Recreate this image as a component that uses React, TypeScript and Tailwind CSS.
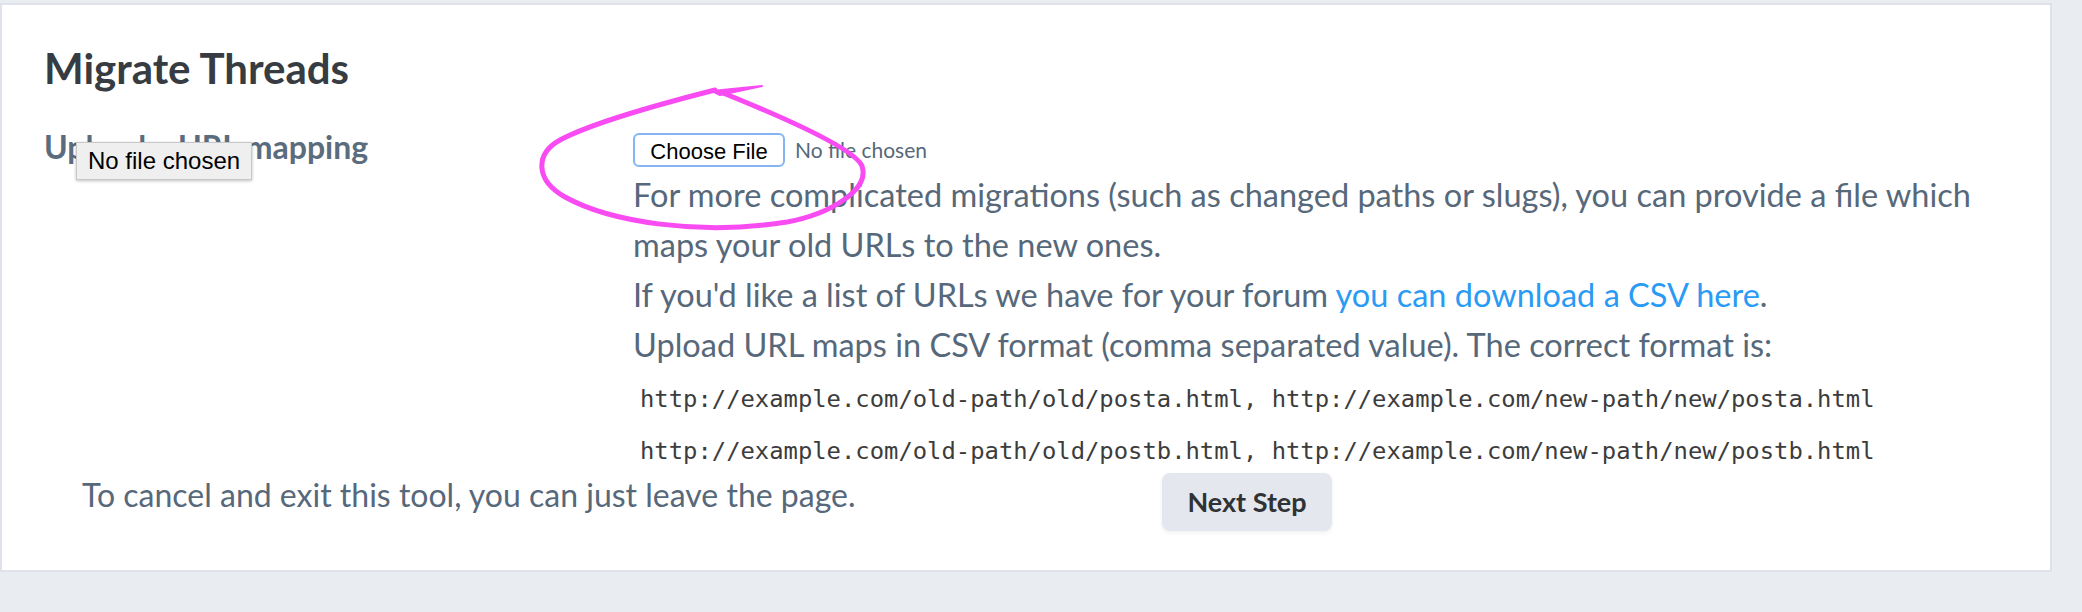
import React from "react";

const sans = { fontFamily: "Lato, 'Noto Sans', sans-serif" };

function FileInput() {
  return (
    <div className="flex h-[37px] items-start">
      <button className="h-[34px] w-[152px] rounded-[6px] border-2 border-[#84b4f2] bg-white text-[22px] text-black [font-family:'Liberation_Sans',Arial,sans-serif]">
        Choose File
      </button>
      <span className="ml-[10px] text-[21px] leading-[34px] text-[#56687a]">No file chosen</span>
    </div>
  );
}

function Annotation() {
  // hand-drawn pink loop around the file input
  return (
    <svg
      className="pointer-events-none absolute left-0 top-0 h-[612px] w-[2082px]"
      viewBox="0 0 2082 612"
      fill="none"
    >
      <path
        d="M715 90 C660 104 590 124 560 140 C535 154 535 180 565 197 C610 222 700 236 787 222 C830 214 870 190 862 166 C855 150 790 120 723 93"
        stroke="#f84bf2"
        strokeWidth="5"
        strokeLinecap="round"
        strokeLinejoin="round"
      />
      <path d="M712 91 L762 86 L720 95 Z" fill="#f84bf2" stroke="#f84bf2" strokeWidth="2" strokeLinejoin="round" />
    </svg>
  );
}

export default function App() {
  return (
    <div className="relative min-h-screen bg-[#e9ecf1] pt-[3px]" style={sans}>
      <div className="w-[2052px] border-2 border-[#dfe2e9] bg-white pb-[39px] pl-[42px] pt-[37px]">
        <h1 className="text-[42px] font-bold leading-[52px] text-[#363c41]">Migrate Threads</h1>

        <div className="mt-[28px] flex">
          <div className="mt-[5px] w-[589px] text-[32px] font-bold leading-[40px] text-[#5a6c7d]">
            Upload a URL mapping
          </div>
          <div className="flex-1 pt-[11px]">
            <FileInput />
            <div className="text-[32.5px] leading-[50px] text-[#56687a]">
              <p>For more complicated migrations (such as changed paths or slugs), you can provide a file which</p>
              <p>maps your old URLs to the new ones.</p>
              <p>
                If you'd like a list of URLs we have for your forum{" "}
                <a href="#" className="text-[#2a9bf4]">you can download a CSV here</a>.
              </p>
              <p>Upload URL maps in CSV format (comma separated value). The correct format is:</p>
            </div>
            <div className="mt-[3px] h-[100px] pl-[7px] text-[23.85px] leading-[52px] text-[#3c3c3c] [font-family:'DejaVu_Sans_Mono',monospace]">
              <div>http://example.com/old-path/old/posta.html, http://example.com/new-path/new/posta.html</div>
              <div className="h-[48px]">http://example.com/old-path/old/postb.html, http://example.com/new-path/new/postb.html</div>
            </div>
          </div>
        </div>

        <div className="flex h-[58px] items-start pl-[38px]">
          <div className="mt-[2px] w-[1080px] text-[32px] leading-[40px] text-[#56687a]">
            To cancel and exit this tool, you can just leave the page.
          </div>
          <button className="h-[58px] w-[170px] rounded-[8px] bg-[#e4e7ee] text-[27px] font-bold text-[#2f3336] shadow-[0_2px_4px_rgba(0,0,0,0.06)]">
            Next Step
          </button>
        </div>
      </div>

      <Annotation />

      <div className="absolute left-[76px] top-[142px] flex h-[38px] w-[176px] items-center border border-[#c8c8c8] bg-[#efefef] pl-[11px] text-[24px] text-black shadow-[0_1px_3px_rgba(0,0,0,0.25)] [font-family:'Liberation_Sans',Arial,sans-serif]">
        No file chosen
      </div>
    </div>
  );
}
